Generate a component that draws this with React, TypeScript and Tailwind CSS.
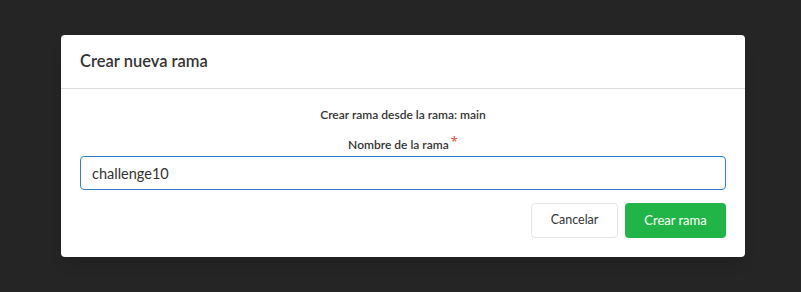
import React, { useState } from 'react';

const CreateBranchModal: React.FC = () => {
  const [name, setName] = useState('challenge10');

  return (
    <div className="ml-[61px] mt-[35px] w-[684px] rounded-[4px] bg-white shadow-lg">
      {/* Header */}
      <div className="flex h-[54px] items-center border-b border-[#dcdcdc] px-[19px]">
        <h2 className="text-[16.5px] font-semibold text-[#333]">Crear nueva rama</h2>
      </div>

      {/* Body */}
      <div className="px-[19px] pt-[18px] pb-[19px]">
        <p className="text-center text-[12px] leading-[16px] font-semibold text-[#333]">
          Crear rama desde la rama: main
        </p>
        <label className="mt-[14px] block text-center text-[12px] leading-[16px] font-semibold text-[#333]">
          Nombre de la rama
          <span className="relative -top-[3px] ml-[2px] font-['Noto_Sans'] text-[13px] leading-none font-normal text-[#e04c3c]">*</span>
        </label>
        <input
          value={name}
          onChange={(e) => setName(e.target.value)}
          className="mt-[3px] block h-[34px] w-full rounded-[4px] border border-[#2f80d1] px-[11px] text-[14.5px] text-[#333] outline-none"
        />

        <div className="mt-[13px] flex justify-end gap-[7px]">
          <button className="h-[35px] w-[87px] rounded-[4px] border border-[#e5e5e5] bg-white text-[12.5px] text-[#333]">
            Cancelar
          </button>
          <button className="h-[35px] w-[101px] rounded-[4px] bg-[#21b547] text-[13px] text-white">
            Crear rama
          </button>
        </div>
      </div>
    </div>
  );
};

const App: React.FC = () => {
  return (
    <div
      className="h-[292px] w-[801px] overflow-hidden bg-[#252525]"
      style={{ fontFamily: 'Lato, "Noto Sans", sans-serif' }}
    >
      <div className="pt-px">
        <div className="-mt-px">
          <CreateBranchModal />
        </div>
      </div>
    </div>
  );
};

export default App;
